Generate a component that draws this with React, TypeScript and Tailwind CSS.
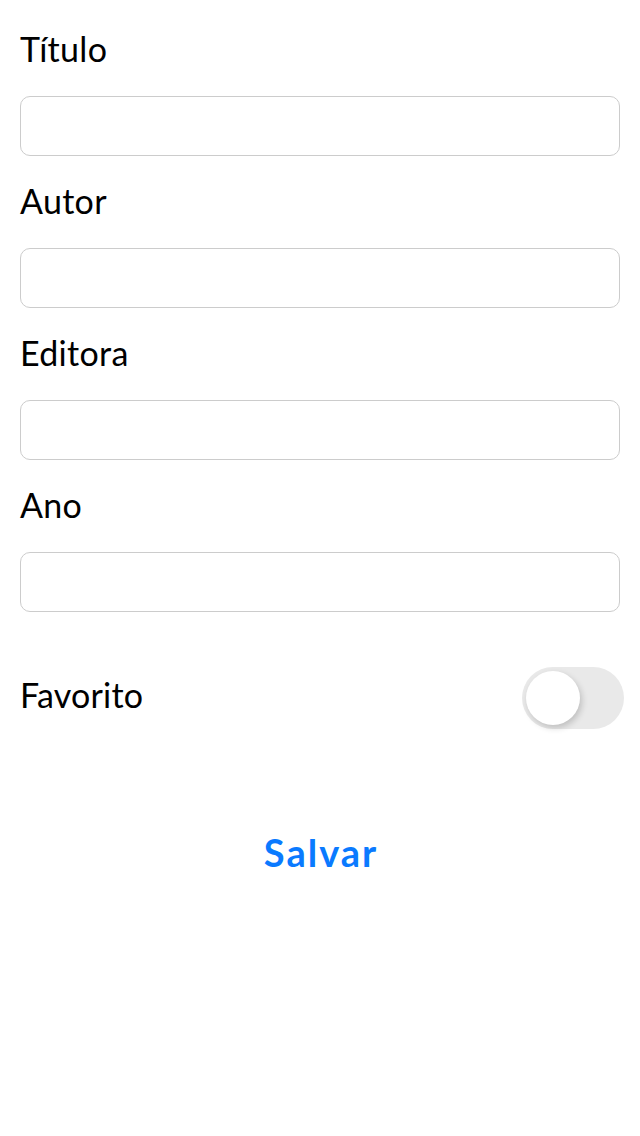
import React, { useState } from "react";

const font = { fontFamily: "Lato, 'Noto Sans', sans-serif" };

function Field({ label, first }: { label: string; first?: boolean }) {
  return (
    <div className={first ? "" : "mt-[25px]"}>
      <div className="h-[40px] text-[34px] leading-[40px] tracking-[0.3px] text-black">{label}</div>
      <input
        type="text"
        className="mt-[27px] block h-[60px] w-full rounded-[10px] border border-[#cccccc] bg-white px-3 text-[30px] outline-none"
      />
    </div>
  );
}

export default function App() {
  const [fav, setFav] = useState(false);
  return (
    <div className="min-h-[1136px] w-full bg-white" style={font}>
      <div className="px-5 pt-[29px]">
        <Field label="Título" first />
        <Field label="Autor" />
        <Field label="Editora" />
        <Field label="Ano" />
      </div>
      <div className="mt-[55px] flex h-[62px] items-center justify-between pl-5 pr-4">
        <span className="mb-[6px] text-[34px] leading-[40px] tracking-[0.2px] text-black">Favorito</span>
        <button
          type="button"
          onClick={() => setFav(!fav)}
          className={
            "relative h-[62px] w-[102px] rounded-full transition-colors " +
            (fav ? "bg-[#4cd964]" : "bg-[#e9e9e9]")
          }
        >
          <span
            className={
              "absolute top-[4px] h-[54px] w-[54px] rounded-full bg-white shadow-[2px_3px_6px_rgba(0,0,0,0.18)] transition-all " +
              (fav ? "left-[44px]" : "left-[4px]")
            }
          />
        </button>
      </div>
      <div className="mt-[101px] flex justify-center">
        <button
          type="button"
          className="h-[44px] pl-[2px] text-[38px] font-bold leading-[44px] tracking-[2px] text-[#0a7aff]"
        >
          Salvar
        </button>
      </div>
    </div>
  );
}
